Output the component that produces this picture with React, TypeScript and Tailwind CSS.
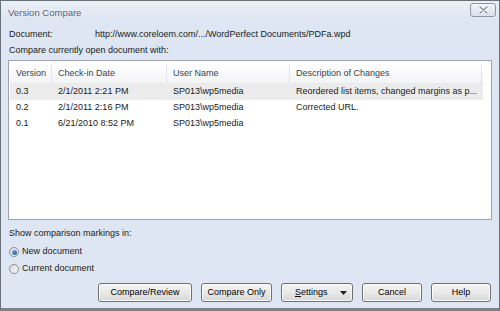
import { Fragment } from 'react'

const versions = [
  { v: '0.3', date: '2/1/2011 2:21 PM', user: 'SP013\\wp5media', desc: 'Reordered list items, changed margins as p...' },
  { v: '0.2', date: '2/1/2011 2:16 PM', user: 'SP013\\wp5media', desc: 'Corrected URL.' },
  { v: '0.1', date: '6/21/2010 8:52 PM', user: 'SP013\\wp5media', desc: '' },
]

const cols = ['w-[42px]', 'w-[115px]', 'w-[123px]', 'w-[192px]']

const Btn = ({ children, w }: { children: React.ReactNode; w: string }) => (
  <button
    className={`${w} h-[19px] rounded-[3px] border border-[#707070] bg-gradient-to-b from-[#f5f5f5] via-[#e9e9e9] to-[#d6d6d6] text-[9px] text-black shadow-[inset_0_0_0_1px_#fbfbfb] flex items-center justify-center`}
  >
    {children}
  </button>
)

const Radio = ({ checked, label }: { checked?: boolean; label: string }) => (
  <div className="flex items-center h-[14px] gap-[3px] pl-px">
    <span className="w-[10px] h-[10px] rounded-full border border-[#8e8f8f] bg-gradient-to-br from-[#d8d8d8] to-[#f8f8f8] flex items-center justify-center">
      {checked && <span className="w-[5px] h-[5px] rounded-full bg-gradient-to-br from-[#7fb2e6] to-[#1c5296]" />}
    </span>
    <span>{label}</span>
  </div>
)

const App = () => {
  return (
    <div
      className="w-[500px] h-[311px] flex flex-col border border-[#6b7179] border-b-[3px] border-b-[#7b828b] bg-[#dde6f2] text-[9px] text-[#1a1a1a] overflow-hidden"
      style={{ fontFamily: '"Liberation Sans", Arial, sans-serif' }}
    >
      <div className="h-[20px] flex items-start justify-between pl-[7px] pr-[3px] bg-gradient-to-b from-[#eaf0f7] to-[#dce5f1]">
        <span className="mt-[5px] text-[9.5px] text-[#56606d] [text-shadow:0_0_3px_#ffffff]">Version Compare</span>
        <div className="mt-[2px] w-[26px] h-[14px] rounded-[3px] border border-[#8d97a4] bg-gradient-to-b from-[#f2f5f9] to-[#d9e1ec] flex items-center justify-center">
          <svg width="9" height="8" viewBox="0 0 9 8">
            <path d="M1 1 L8 7 M8 1 L1 7" stroke="#ffffff" strokeWidth="3" strokeLinecap="round" />
            <path d="M1 1 L8 7 M8 1 L1 7" stroke="#7d8793" strokeWidth="1.4" strokeLinecap="round" />
          </svg>
        </div>
      </div>

      <div className="flex-1 flex flex-col px-[7px]">
        <div className="mt-[7px] h-[14px] flex items-center pl-px">
          <span className="w-[86px]">Document:</span>
          <span>http://www.coreloem.com/.../WordPerfect Documents/PDFa.wpd</span>
        </div>
        <div className="mt-[2px] h-[14px] flex items-center pl-px">Compare currently open document with:</div>

        <div className="mt-[2px] h-[160px] border border-[#9da4ad] bg-white pt-[3px] pl-px">
          <div className="flex w-[473px] h-[20px] items-center bg-gradient-to-b from-[#ffffff] to-[#f3f4f6] border-b border-[#e7e9ec] text-[#3b4350]">
            {['Version', 'Check-in Date', 'User Name', 'Description of Changes'].map((h, i) => (
              <div key={h} className={`${cols[i]} h-full flex items-center pl-[6px] border-r border-[#e3e5e8]`}>
                {h}
              </div>
            ))}
          </div>
          {versions.map((r, idx) => (
            <div key={r.v} className={`flex w-[473px] h-[16px] items-center ${idx === 0 ? 'bg-[#ececec]' : ''}`}>
              <Fragment>
                <div className={`${cols[0]} pl-[6px]`}>{r.v}</div>
                <div className={`${cols[1]} pl-[6px]`}>{r.date}</div>
                <div className={`${cols[2]} pl-[6px]`}>{r.user}</div>
                <div className={`${cols[3]} pl-[6px] whitespace-nowrap`}>{r.desc}</div>
              </Fragment>
            </div>
          ))}
        </div>

        <div className="mt-[7px] h-[14px] flex items-center pl-px">Show comparison markings in:</div>
        <div className="mt-[4px]">
          <Radio checked label="New document" />
        </div>
        <div className="mt-[3px]">
          <Radio label="Current document" />
        </div>

        <div className="mt-[7px] flex justify-end pr-px gap-[9px]">
          <Btn w="w-[94px]">Compare/Review</Btn>
          <Btn w="w-[71px]">Compare Only</Btn>
          <button className="w-[72px] h-[19px] rounded-[3px] border border-[#707070] bg-gradient-to-b from-[#f5f5f5] via-[#e9e9e9] to-[#d6d6d6] shadow-[inset_0_0_0_1px_#fbfbfb] text-[9px] text-black flex items-center justify-between pl-[13px] pr-[5px]">
            <span>
              <span className="underline">S</span>ettings
            </span>
            <svg width="7" height="4" viewBox="0 0 7 4">
              <path d="M0 0 H7 L3.5 4 Z" fill="#222" />
            </svg>
          </button>
          <Btn w="w-[60px]">Cancel</Btn>
          <Btn w="w-[60px]">Help</Btn>
        </div>
      </div>
    </div>
  )
}

export default App
